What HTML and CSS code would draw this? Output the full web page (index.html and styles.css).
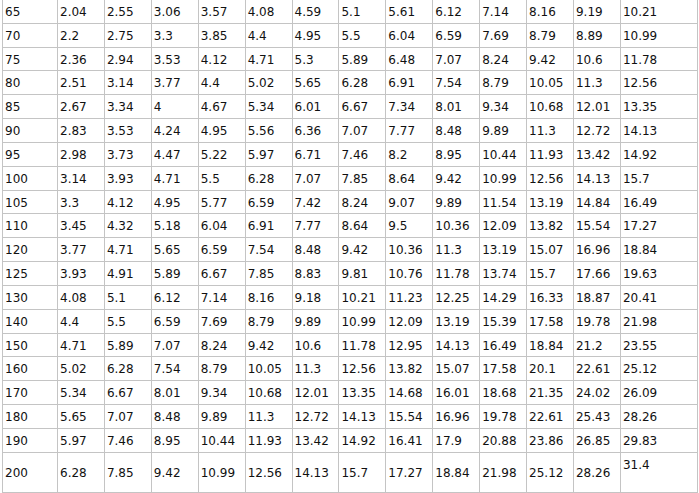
FILE: index.html
```html
<!DOCTYPE html>
<html>
<head>
<meta charset="utf-8">
<link rel="stylesheet" href="styles.css">
</head>
<body>
<table class="grid">
<colgroup>
<col class="c-first">
<col class="c-mid"><col class="c-mid"><col class="c-mid"><col class="c-mid"><col class="c-mid"><col class="c-mid">
<col class="c-mid"><col class="c-mid"><col class="c-mid"><col class="c-mid"><col class="c-mid"><col class="c-mid">
<col class="c-last">
</colgroup>
<tbody>
<tr><td>65</td><td>2.04</td><td>2.55</td><td>3.06</td><td>3.57</td><td>4.08</td><td>4.59</td><td>5.1</td><td>5.61</td><td>6.12</td><td>7.14</td><td>8.16</td><td>9.19</td><td>10.21</td></tr>
<tr><td>70</td><td>2.2</td><td>2.75</td><td>3.3</td><td>3.85</td><td>4.4</td><td>4.95</td><td>5.5</td><td>6.04</td><td>6.59</td><td>7.69</td><td>8.79</td><td>8.89</td><td>10.99</td></tr>
<tr><td>75</td><td>2.36</td><td>2.94</td><td>3.53</td><td>4.12</td><td>4.71</td><td>5.3</td><td>5.89</td><td>6.48</td><td>7.07</td><td>8.24</td><td>9.42</td><td>10.6</td><td>11.78</td></tr>
<tr><td>80</td><td>2.51</td><td>3.14</td><td>3.77</td><td>4.4</td><td>5.02</td><td>5.65</td><td>6.28</td><td>6.91</td><td>7.54</td><td>8.79</td><td>10.05</td><td>11.3</td><td>12.56</td></tr>
<tr><td>85</td><td>2.67</td><td>3.34</td><td>4</td><td>4.67</td><td>5.34</td><td>6.01</td><td>6.67</td><td>7.34</td><td>8.01</td><td>9.34</td><td>10.68</td><td>12.01</td><td>13.35</td></tr>
<tr><td>90</td><td>2.83</td><td>3.53</td><td>4.24</td><td>4.95</td><td>5.56</td><td>6.36</td><td>7.07</td><td>7.77</td><td>8.48</td><td>9.89</td><td>11.3</td><td>12.72</td><td>14.13</td></tr>
<tr><td>95</td><td>2.98</td><td>3.73</td><td>4.47</td><td>5.22</td><td>5.97</td><td>6.71</td><td>7.46</td><td>8.2</td><td>8.95</td><td>10.44</td><td>11.93</td><td>13.42</td><td>14.92</td></tr>
<tr><td>100</td><td>3.14</td><td>3.93</td><td>4.71</td><td>5.5</td><td>6.28</td><td>7.07</td><td>7.85</td><td>8.64</td><td>9.42</td><td>10.99</td><td>12.56</td><td>14.13</td><td>15.7</td></tr>
<tr><td>105</td><td>3.3</td><td>4.12</td><td>4.95</td><td>5.77</td><td>6.59</td><td>7.42</td><td>8.24</td><td>9.07</td><td>9.89</td><td>11.54</td><td>13.19</td><td>14.84</td><td>16.49</td></tr>
<tr><td>110</td><td>3.45</td><td>4.32</td><td>5.18</td><td>6.04</td><td>6.91</td><td>7.77</td><td>8.64</td><td>9.5</td><td>10.36</td><td>12.09</td><td>13.82</td><td>15.54</td><td>17.27</td></tr>
<tr><td>120</td><td>3.77</td><td>4.71</td><td>5.65</td><td>6.59</td><td>7.54</td><td>8.48</td><td>9.42</td><td>10.36</td><td>11.3</td><td>13.19</td><td>15.07</td><td>16.96</td><td>18.84</td></tr>
<tr><td>125</td><td>3.93</td><td>4.91</td><td>5.89</td><td>6.67</td><td>7.85</td><td>8.83</td><td>9.81</td><td>10.76</td><td>11.78</td><td>13.74</td><td>15.7</td><td>17.66</td><td>19.63</td></tr>
<tr><td>130</td><td>4.08</td><td>5.1</td><td>6.12</td><td>7.14</td><td>8.16</td><td>9.18</td><td>10.21</td><td>11.23</td><td>12.25</td><td>14.29</td><td>16.33</td><td>18.87</td><td>20.41</td></tr>
<tr><td>140</td><td>4.4</td><td>5.5</td><td>6.59</td><td>7.69</td><td>8.79</td><td>9.89</td><td>10.99</td><td>12.09</td><td>13.19</td><td>15.39</td><td>17.58</td><td>19.78</td><td>21.98</td></tr>
<tr><td>150</td><td>4.71</td><td>5.89</td><td>7.07</td><td>8.24</td><td>9.42</td><td>10.6</td><td>11.78</td><td>12.95</td><td>14.13</td><td>16.49</td><td>18.84</td><td>21.2</td><td>23.55</td></tr>
<tr><td>160</td><td>5.02</td><td>6.28</td><td>7.54</td><td>8.79</td><td>10.05</td><td>11.3</td><td>12.56</td><td>13.82</td><td>15.07</td><td>17.58</td><td>20.1</td><td>22.61</td><td>25.12</td></tr>
<tr><td>170</td><td>5.34</td><td>6.67</td><td>8.01</td><td>9.34</td><td>10.68</td><td>12.01</td><td>13.35</td><td>14.68</td><td>16.01</td><td>18.68</td><td>21.35</td><td>24.02</td><td>26.09</td></tr>
<tr><td>180</td><td>5.65</td><td>7.07</td><td>8.48</td><td>9.89</td><td>11.3</td><td>12.72</td><td>14.13</td><td>15.54</td><td>16.96</td><td>19.78</td><td>22.61</td><td>25.43</td><td>28.26</td></tr>
<tr><td>190</td><td>5.97</td><td>7.46</td><td>8.95</td><td>10.44</td><td>11.93</td><td>13.42</td><td>14.92</td><td>16.41</td><td>17.9</td><td>20.88</td><td>23.86</td><td>26.85</td><td>29.83</td></tr>
<tr class="tall"><td>200</td><td>6.28</td><td>7.85</td><td>9.42</td><td>10.99</td><td>12.56</td><td>14.13</td><td>15.7</td><td>17.27</td><td>18.84</td><td>21.98</td><td>25.12</td><td>28.26</td><td class="top">31.4</td></tr>
</tbody>
</table>
</body>
</html>
```

FILE: styles.css
```css
html, body {
  margin: 0;
  padding: 0;
  background: #ffffff;
}

body {
  padding-left: 2px;
  font-family: "DejaVu Sans", Verdana, sans-serif;
  font-size: 12px;
  color: #111111;
}

.grid {
  border-collapse: collapse;
  table-layout: fixed;
  width: 696px;
  margin-top: -1px;
}

.c-first { width: 55px; }
.c-mid { width: 46.92px; }
.c-last { width: 77px; }

.grid td {
  border: 1px solid #c4c4c4;
  padding: 1px 1px 0 2px;
  height: 21.83px;
  line-height: 14px;
  vertical-align: middle;
  white-space: nowrap;
  text-align: left;
}

.grid tr.tall td {
  height: 34px;
}

.grid td.top {
  vertical-align: top;
  padding-top: 5px;
}
```
